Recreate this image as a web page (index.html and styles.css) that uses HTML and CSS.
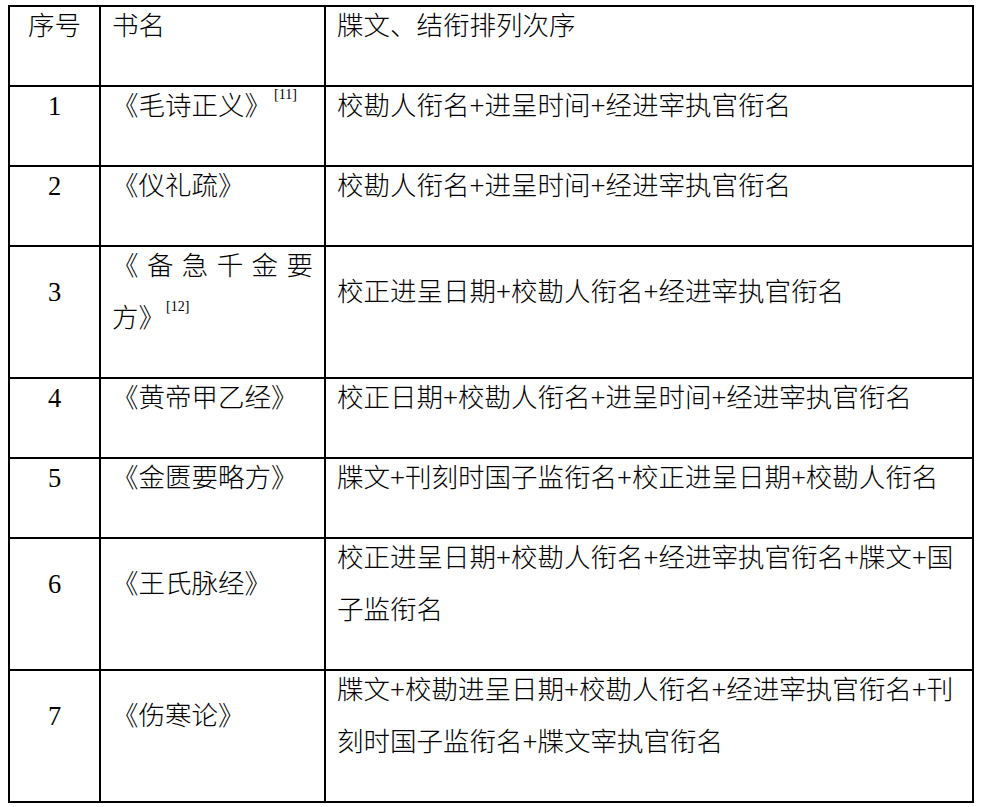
FILE: index.html
```html
<!DOCTYPE html>
<html lang="zh-CN">
<head>
<meta charset="utf-8">
<title>牒文、结衔排列次序</title>
<link rel="stylesheet" href="styles.css">
</head>
<body>
<table class="order-table">
  <colgroup>
    <col class="col-no">
    <col class="col-name">
    <col class="col-seq">
  </colgroup>
  <tbody>
    <tr class="row-1">
      <td class="no"><p>序号</p></td>
      <td class="name"><p>书名</p></td>
      <td class="seq"><p>牒文、结衔排列次序</p></td>
    </tr>
    <tr class="row-1">
      <td class="no"><p>1</p></td>
      <td class="name"><p>《毛诗正义》<sup class="ref">[11]</sup></p></td>
      <td class="seq"><p>校勘人衔名+进呈时间+经进宰执官衔名</p></td>
    </tr>
    <tr class="row-1">
      <td class="no"><p>2</p></td>
      <td class="name"><p>《仪礼疏》</p></td>
      <td class="seq"><p>校勘人衔名+进呈时间+经进宰执官衔名</p></td>
    </tr>
    <tr class="row-2">
      <td class="no"><p>3</p></td>
      <td class="name"><p class="just">《备急千金要方》<sup class="ref tight">[12]</sup></p></td>
      <td class="seq"><p>校正进呈日期+校勘人衔名+经进宰执官衔名</p></td>
    </tr>
    <tr class="row-1">
      <td class="no"><p>4</p></td>
      <td class="name"><p>《黄帝甲乙经》</p></td>
      <td class="seq"><p>校正日期+校勘人衔名+进呈时间+经进宰执官衔名</p></td>
    </tr>
    <tr class="row-1">
      <td class="no"><p>5</p></td>
      <td class="name"><p>《金匮要略方》</p></td>
      <td class="seq"><p>牒文+刊刻时国子监衔名+校正进呈日期+校勘人衔名</p></td>
    </tr>
    <tr class="row-2">
      <td class="no"><p>6</p></td>
      <td class="name"><p>《王氏脉经》</p></td>
      <td class="seq"><p>校正进呈日期+校勘人衔名+经进宰执官衔名+牒文+国子监衔名</p></td>
    </tr>
    <tr class="row-2">
      <td class="no"><p>7</p></td>
      <td class="name"><p>《伤寒论》</p></td>
      <td class="seq"><p>牒文+校勘进呈日期+校勘人衔名+经进宰执官衔名+刊刻时国子监衔名+牒文宰执官衔名</p></td>
    </tr>
  </tbody>
</table>
</body>
</html>
```
FILE: styles.css
```css
html, body {
  margin: 0;
  padding: 0;
  background: #fff;
}

body {
  padding: 5px 0 0 8px;
  font-family: "Liberation Serif", "Noto Sans CJK SC", serif;
  font-size: 26.5px;
  font-weight: 300;
  color: #000;
  text-spacing-trim: space-all;
}

.order-table {
  border-collapse: collapse;
  table-layout: fixed;
  width: 964px;
  border: 2px solid #000;
}

.col-no { width: 91px; }
.col-name { width: 225px; }
.col-seq { width: 648px; }

.order-table td {
  border: 2px solid #000;
  padding: 0 11px 32px 11px;
  vertical-align: middle;
  text-align: left;
}

.row-1 td { height: 46px; }
.row-2 td { height: 98px; }

.order-table p {
  margin: -8px 0 0 0;
  line-height: 52px;
}

.order-table td.no {
  text-align: center;
  padding-left: 2px;
  padding-right: 2px;
}

.order-table td.seq p {
  line-break: anywhere;
}

.just {
  text-align: justify;
  text-justify: inter-character;
}

.ref {
  font-size: 14px;
  line-height: 0;
  vertical-align: 16px;
  margin-left: 3px;
}

.ref.tight {
  margin-left: 1px;
}
```
